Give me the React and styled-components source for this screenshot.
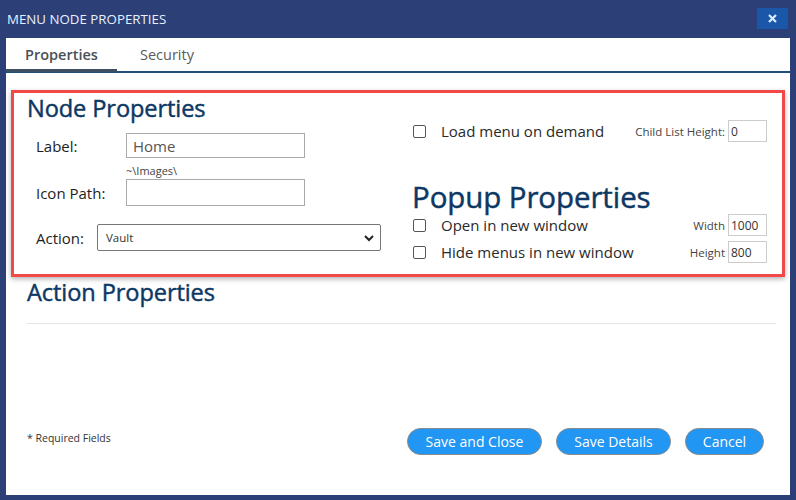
import { createGlobalStyle, styled } from "styled-components";

const GlobalStyle = createGlobalStyle`
  * { box-sizing: border-box; }
  body {
    margin: 0;
    background: #2c3f77;
    font-family: "Open Sans", "Noto Sans", sans-serif;
  }
`;

const Dialog = styled.div`
  width: 796px;
  height: 500px;
  background: #2c3f77;
  display: flex;
  flex-direction: column;
`;

const TitleBar = styled.div`
  height: 38px;
  display: flex;
  align-items: center;
  justify-content: space-between;
  padding: 0 8px 0 7px;
  color: #e8f1ff;
  font-size: 13.3px;
`;

const CloseButton = styled.button`
  width: 31px;
  height: 21px;
  border: none;
  margin-top: -1px;
  background: #1b57a8;
  color: #d8ecff;
  display: flex;
  align-items: center;
  justify-content: center;
  padding: 0;
`;

const Body = styled.div`
  flex: 1;
  margin: 0 6px 5px 6px;
  background: #fff;
  display: flex;
  flex-direction: column;
`;

const Tabs = styled.div`
  height: 35px;
  display: flex;
  align-items: stretch;
  border-bottom: 2px solid #1f4e79;
`;

const Tab = styled.div`
  width: ${(p) => p.$w}px;
  display: flex;
  align-items: center;
  justify-content: center;
  padding-top: 1px;
  font-size: 14.5px;
  color: ${(p) => (p.$active ? "#4a4f57" : "#5a5a5a")};
  font-weight: ${(p) => (p.$active ? 600 : 400)};
  border-bottom: 3px solid ${(p) => (p.$active ? "#3d5063" : "transparent")};
  margin-bottom: -1px;
`;

const Highlight = styled.div`
  margin: 17px 5px 0 5px;
  border: 3px solid #f24848;
  box-shadow: 0 2px 5px rgba(0, 0, 0, 0.3);
  height: 187px;
  display: grid;
  grid-template-columns: 385px 1fr;
  padding: 0 15px 0 13px;
`;

const Column = styled.div`
  display: flex;
  flex-direction: column;
`;

const Heading = styled.h2`
  margin: 0;
  font-weight: 400;
  color: #0d3863;
  -webkit-text-stroke: 0.45px #0d3863;
  font-size: ${(p) => p.$size || 23.6}px;
  line-height: ${(p) => p.$lh || 28}px;
  letter-spacing: -0.1px;
`;

const FieldRow = styled.div`
  display: flex;
  align-items: center;
  margin-top: ${(p) => p.$mt || 0}px;
  padding-left: 9px;
`;

const Label = styled.label`
  width: ${(p) => p.$w}px;
  font-size: 15px;
  color: #1e1e1e;
`;

const TextInput = styled.input`
  width: 179px;
  height: ${(p) => p.$h || 25}px;
  border: 1px solid #aaa;
  padding: 0 6px;
  font-family: inherit;
  font-size: 15px;
  color: #555;
  outline: none;
`;

const Hint = styled.div`
  font-size: 11px;
  color: #444;
  margin: 6px 0 0 99px;
  line-height: 14px;
`;

const SelectBox = styled.div`
  width: 284px;
  height: 27px;
  border: 1px solid #767676;
  border-radius: 2px;
  display: flex;
  align-items: center;
  justify-content: space-between;
  padding: 0 6px 0 8px;
  font-size: 11.5px;
  color: #333;
`;

const CheckRow = styled.div`
  display: flex;
  align-items: center;
  height: 22px;
  margin-top: ${(p) => p.$mt || 0}px;
`;

const Check = styled.span`
  width: 13px;
  height: 13px;
  border: 1px solid #555;
  border-radius: 2px;
  margin-left: 1px;
  margin-right: 15px;
  flex-shrink: 0;
`;

const CheckText = styled.span`
  font-size: 15px;
  color: #2a2a2a;
  flex: 1;
`;

const SmallLabel = styled.span`
  font-size: 11.5px;
  color: #444;
  margin-right: 3px;
`;

const SmallInput = styled.input`
  width: 39px;
  height: 22px;
  border: 1px solid #ccc;
  padding: 0 2px;
  font-family: inherit;
  font-size: 12px;
  color: #333;
  outline: none;
`;

const Section = styled.div`
  padding: 0 14px 0 21px;
`;

const Divider = styled.div`
  height: 1px;
  background: #e6e6e6;
  margin-top: 17px;
`;

const Footer = styled.div`
  margin-top: auto;
  display: flex;
  align-items: center;
  padding: 0 26px 40px 21px;
`;

const Required = styled.div`
  font-size: 10.5px;
  color: #333;
  flex: 1;
  margin-bottom: 8px;
`;

const Button = styled.button`
  height: 27px;
  width: ${(p) => p.$w}px;
  margin-left: ${(p) => p.$ml || 0}px;
  border-radius: 14px;
  border: 1px solid #8a8a8a;
  background: #2196f3;
  color: #fff;
  font-family: inherit;
  font-size: 14px;
  padding: 0;
`;

const Chevron = () => (
  <svg width="10" height="8" viewBox="0 0 10 8">
    <path d="M1 2 L5 6 L9 2" fill="none" stroke="#222" strokeWidth="2" />
  </svg>
);

const CloseIcon = () => (
  <svg width="9" height="9" viewBox="0 0 9 9">
    <path d="M1 1 L8 8 M8 1 L1 8" stroke="#d8ecff" strokeWidth="2.2" />
  </svg>
);

export default function App() {
  return (
    <>
      <GlobalStyle />
      <Dialog>
        <TitleBar>
          <span>MENU NODE PROPERTIES</span>
          <CloseButton>
            <CloseIcon />
          </CloseButton>
        </TitleBar>
        <Body>
          <Tabs>
            <Tab $w={111} $active>
              Properties
            </Tab>
            <Tab $w={100}>Security</Tab>
          </Tabs>

          <Highlight>
            <Column>
              <Heading style={{ marginTop: 1 }}>Node Properties</Heading>
              <FieldRow $mt={11}>
                <Label $w={90}>Label:</Label>
                <TextInput defaultValue="Home" />
              </FieldRow>
              <Hint>~\Images\</Hint>
              <FieldRow $mt={1}>
                <Label $w={90}>Icon Path:</Label>
                <TextInput $h={27} />
              </FieldRow>
              <FieldRow $mt={18}>
                <Label $w={61}>Action:</Label>
                <SelectBox>
                  <span>Vault</span>
                  <Chevron />
                </SelectBox>
              </FieldRow>
            </Column>
            <Column>
              <CheckRow $mt={27}>
                <Check />
                <CheckText>Load menu on demand</CheckText>
                <SmallLabel>Child List Height:</SmallLabel>
                <SmallInput defaultValue="0" />
              </CheckRow>
              <Heading $size={29.5} $lh={34} style={{ marginTop: 38 }}>
                Popup Properties
              </Heading>
              <CheckRow $mt={0}>
                <Check />
                <CheckText>Open in new window</CheckText>
                <SmallLabel>Width</SmallLabel>
                <SmallInput defaultValue="1000" />
              </CheckRow>
              <CheckRow $mt={5}>
                <Check />
                <CheckText>Hide menus in new window</CheckText>
                <SmallLabel>Height</SmallLabel>
                <SmallInput defaultValue="800" />
              </CheckRow>
            </Column>
          </Highlight>

          <Section>
            <Heading style={{ marginTop: 1 }}>Action Properties</Heading>
            <Divider />
          </Section>

          <Footer>
            <Required>* Required Fields</Required>
            <Button $w={135}>Save and Close</Button>
            <Button $w={115} $ml={14}>
              Save Details
            </Button>
            <Button $w={79} $ml={14}>
              Cancel
            </Button>
          </Footer>
        </Body>
      </Dialog>
    </>
  );
}
